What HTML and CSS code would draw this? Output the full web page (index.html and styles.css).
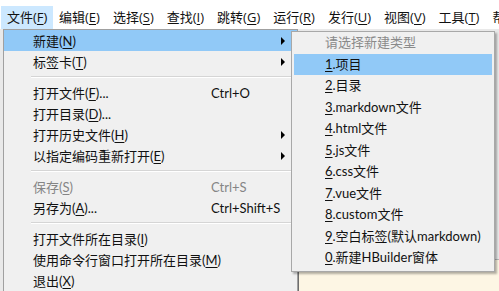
FILE: index.html
```html
<!DOCTYPE html>
<html lang="zh-CN">

<head>
    <meta charset="UTF-8">
    <meta name="viewport" content="width=device-width, initial-scale=1.0">
    <title>HBuilder 文件菜单</title>
    <link rel="stylesheet" href="styles.css">
</head>

<body>
    <section id='menubar'>
        <span class='top-item active'>文件(<u>F</u>)</span>
        <span class='top-item'>编辑(<u>E</u>)</span>
        <span class='top-item'>选择(<u>S</u>)</span>
        <span class='top-item'>查找(<u>I</u>)</span>
        <span class='top-item'>跳转(<u>G</u>)</span>
        <span class='top-item'>运行(<u>R</u>)</span>
        <span class='top-item'>发行(<u>U</u>)</span>
        <span class='top-item'>视图(<u>V</u>)</span>
        <span class='top-item'>工具(<u>T</u>)</span>
        <span class='top-item'>帮助</span>
    </section>

    <section id='workspace'>
        <ul id='file-menu' class='menu'>
            <li class='item selected'><span class='label'>新建(<u>N</u>)</span><i class='arrow'></i></li>
            <li class='item'><span class='label'>标签卡(<u>T</u>)</span><i class='arrow'></i></li>
            <li class='sep'></li>
            <li class='item'><span class='label'>打开文件(<u>F</u>)...</span><span class='key'>Ctrl+O</span></li>
            <li class='item'><span class='label'>打开目录(<u>D</u>)...</span></li>
            <li class='item'><span class='label'>打开历史文件(<u>H</u>)</span><i class='arrow'></i></li>
            <li class='item'><span class='label'>以指定编码重新打开(<u>E</u>)</span><i class='arrow'></i></li>
            <li class='sep'></li>
            <li class='item disabled'><span class='label'>保存(<u>S</u>)</span><span class='key'>Ctrl+S</span></li>
            <li class='item'><span class='label'>另存为(<u>A</u>)...</span><span class='key'>Ctrl+Shift+S</span></li>
            <li class='sep'></li>
            <li class='item'><span class='label'>打开文件所在目录(<u>I</u>)</span></li>
            <li class='item'><span class='label'>使用命令行窗口打开所在目录(<u>M</u>)</span></li>
            <li class='item'><span class='label'>退出(<u>X</u>)</span></li>
        </ul>

        <ul id='new-menu' class='menu'>
            <li class='sub-item title'>请选择新建类型</li>
            <li class='sub-item selected'><u>1</u>.项目</li>
            <li class='sub-item'><u>2</u>.目录</li>
            <li class='sub-item'><u>3</u>.markdown文件</li>
            <li class='sub-item'><u>4</u>.html文件</li>
            <li class='sub-item'><u>5</u>.js文件</li>
            <li class='sub-item'><u>6</u>.css文件</li>
            <li class='sub-item'><u>7</u>.vue文件</li>
            <li class='sub-item'><u>8</u>.custom文件</li>
            <li class='sub-item'><u>9</u>.空白标签(默认markdown)</li>
            <li class='sub-item'><u>0</u>.新建HBuilder窗体</li>
        </ul>
    </section>
</body>

</html>
```

FILE: styles.css
```css
* {
    margin: 0;
    padding: 0;
    box-sizing: border-box;
}

html,
body {
    height: 100%;
    overflow: hidden;
}

body {
    font-family: Lato, "Noto Sans CJK SC", sans-serif;
    font-size: 13px;
    color: #111;
    background: #fff;
}

u {
    text-decoration-thickness: 1px;
    text-underline-offset: 2px;
}

#menubar {
    height: 29px;
    background: #fff;
    display: flex;
    align-items: flex-end;
    padding-left: 1px;
    white-space: nowrap;
    overflow: hidden;
    font-family: "Open Sans", "Noto Sans CJK SC", sans-serif;
}

.top-item {
    height: 23px;
    line-height: 22px;
    padding: 0 7px 0 6px;
    flex-shrink: 0;
}

.top-item.active {
    background-color: #cce8ff;
    width: 52px;
}

#workspace {
    height: calc(100% - 29px);
    position: relative;
    background: #e9e9e9;
}

#workspace::after {
    content: '';
    position: absolute;
    left: 297px;
    right: 0;
    top: 230px;
    bottom: 0;
    background: #fdf6e4;
    border-left: 2px solid #6e6e6e;
    border-top: 1px solid #b8b8b8;
}

.menu {
    list-style: none;
    position: absolute;
    background: #f0f0f0;
    z-index: 1;
}

#file-menu {
    left: 3px;
    top: 0;
    width: 295px;
    height: 280px;
    border: 1px solid #a0a0a0;
    border-bottom: none;
}

.item {
    height: 21px;
    display: flex;
    align-items: center;
    padding-left: 29px;
    position: relative;
    white-space: nowrap;
}

.item.selected {
    background-color: #91c9f7;
}

.item.disabled {
    color: #858585;
}

.item .label {
    width: 178px;
}

.arrow {
    position: absolute;
    left: 277px;
    top: 7px;
    width: 0;
    height: 0;
    border-top: 4px solid transparent;
    border-bottom: 4px solid transparent;
    border-left: 4px solid #000;
}

.sep {
    height: 10px;
    margin-left: 27px;
    margin-right: 2px;
    position: relative;
}

.sep::before {
    content: '';
    position: absolute;
    left: 0;
    right: 0;
    top: 4px;
    border-top: 1px solid #d5d5d5;
    border-bottom: 1px solid #fff;
}

#new-menu {
    left: 291px;
    top: 2px;
    width: 204px;
    border: 1px solid #a8a8a8;
    padding: 0 2px 2px 2px;
    box-shadow: 2px 2px 2px rgba(0, 0, 0, 0.3);
    z-index: 2;
}

.sub-item {
    height: 21.5px;
    line-height: 21px;
    padding-left: 31px;
    white-space: nowrap;
}

.sub-item.title {
    color: #8a8a8a;
}

.sub-item.selected {
    background-color: #91c9f7;
}
```
